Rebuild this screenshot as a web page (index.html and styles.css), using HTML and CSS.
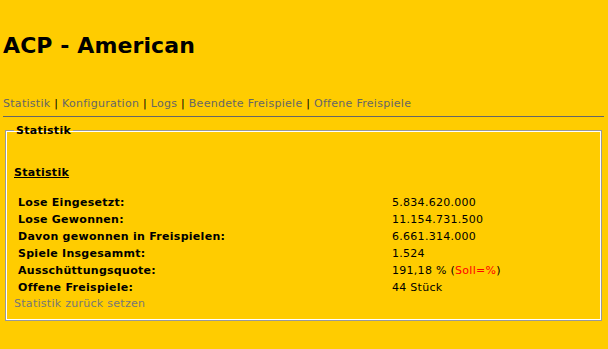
FILE: index.html
```html
<!DOCTYPE html>
<html>
<head>
<meta charset="utf-8">
<link rel="stylesheet" href="styles.css">
</head>
<body>
<h1 class="title">ACP - American</h1>
<nav class="nav">
<a href="#">Statistik</a> | <a href="#">Konfiguration</a> | <a href="#">Logs</a> | <a href="#">Beendete Freispiele</a> | <a href="#">Offene Freispiele</a>
</nav>
<hr class="rule">
<fieldset class="box">
<legend class="legend">Statistik</legend>
<h2 class="subtitle">Statistik</h2>
<table class="stats">
<tr><th>Lose Eingesetzt:</th><td>5.834.620.000</td></tr>
<tr><th>Lose Gewonnen:</th><td>11.154.731.500</td></tr>
<tr><th>Davon gewonnen in Freispielen:</th><td>6.661.314.000</td></tr>
<tr><th>Spiele Insgesammt:</th><td>1.524</td></tr>
<tr><th>Ausschüttungsquote:</th><td>191,18 % (<span class="red">Soll=%</span>)</td></tr>
<tr><th>Offene Freispiele:</th><td>44 Stück</td></tr>
</table>
<a class="reset" href="#">Statistik zurück setzen</a>
</fieldset>
</body>
</html>
```
FILE: styles.css
```css
html, body {
  background: #ffcc00;
}
body {
  margin: 0 4px 0 3px;
  font-family: "DejaVu Sans", Verdana, sans-serif;
  font-size: 11px;
  letter-spacing: 0.28px;
  color: #000;
}
.title {
  margin: 0;
  padding-top: 33px;
  font-size: 22px;
  line-height: 26px;
  font-weight: bold;
  letter-spacing: 0.1px;
  padding-left: 0;
}
.nav {
  margin-top: 38px;
  line-height: 14px;
}
.nav a {
  color: #666;
  text-decoration: none;
}
.rule {
  margin: 5px 0 0 0;
  border: 0;
  border-top: 1px solid #666;
  height: 0;
}
.box {
  margin: 7px 2px 0 2px;
  padding: 0 6px 9px 8px;
  border: 1px solid #999;
  box-shadow: inset 0 0 0 1px #fff;
}
.legend {
  font-weight: bold;
  padding: 0 2px;
  margin-left: 0;
}
.subtitle {
  margin: 29px 0 15px 0;
  font-size: 11px;
  font-weight: bold;
  text-decoration: underline;
}
.stats {
  border-collapse: collapse;
  width: 100%;
}
.stats th {
  text-align: left;
  font-weight: bold;
  padding: 0 0 0 4px;
  height: 17px;
  width: 374px;
}
.stats td {
  padding: 0;
  height: 17px;
}
.red {
  color: #ff0000;
}
.reset {
  display: block;
  color: #777;
  text-decoration: none;
  line-height: 15px;
}
```
